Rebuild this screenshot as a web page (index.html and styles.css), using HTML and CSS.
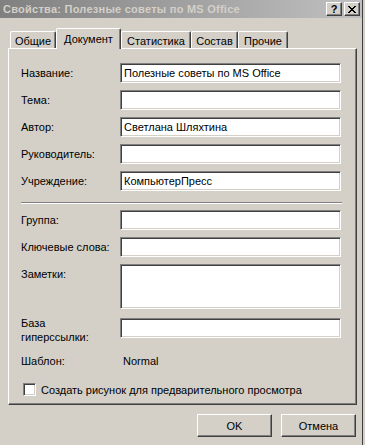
FILE: index.html
```html
<!DOCTYPE html>
<html lang="ru">
<head>
<meta charset="utf-8">
<title>Свойства</title>
<link rel="stylesheet" href="styles.css">
</head>
<body>
<div class="window">
  <div class="titlebar">
    <span class="title">Свойства: Полезные советы по MS Office</span>
    <div class="caption-btns">
      <span class="cbtn cbtn-help">?</span>
      <span class="cbtn cbtn-close"><svg width="8" height="7" viewBox="0 0 8 7"><path d="M0 0h2v1h1v1h2v-1h1v-1h2v1h-1v1h-1v1h-1v1h1v1h1v1h1v1h-2v-1h-1v-1h-2v1h-1v1h-2v-1h1v-1h1v-1h1v-1h-1v-1h-1v-1h-1z" fill="#000"/></svg></span>
    </div>
  </div>
  <div class="tabs">
    <div class="tab tab-general">Общие</div>
    <div class="tab tab-doc active">Документ</div>
    <div class="tab tab-stat">Статистика</div>
    <div class="tab tab-comp">Состав</div>
    <div class="tab tab-other">Прочие</div>
  </div>
  <div class="panel">
    <div class="grid">
      <label class="lbl">Название:</label>
      <input class="field" type="text" value="Полезные советы по MS Office">
      <label class="lbl">Тема:</label>
      <input class="field" type="text" value="">
      <label class="lbl">Автор:</label>
      <input class="field" type="text" value="Светлана Шляхтина">
      <label class="lbl">Руководитель:</label>
      <input class="field" type="text" value="">
      <label class="lbl">Учреждение:</label>
      <input class="field" type="text" value="КомпьютерПресс">
    </div>
    <div class="sep"></div>
    <div class="grid">
      <label class="lbl">Группа:</label>
      <input class="field" type="text" value="">
      <label class="lbl">Ключевые слова:</label>
      <input class="field" type="text" value="">
      <label class="lbl">Заметки:</label>
      <textarea class="field notes"></textarea>
      <label class="lbl lbl-two">База<br>гиперссылки:</label>
      <input class="field field-base" type="text" value="">
      <span class="lbl lbl-plain">Шаблон:</span>
      <span class="value">Normal</span>
    </div>
    <div class="check-row">
      <span class="checkbox"></span>
      <span class="check-label">Создать рисунок для предварительного просмотра</span>
    </div>
  </div>
  <div class="buttons">
    <span class="btn">OK</span>
    <span class="btn">Отмена</span>
  </div>
</div>
</body>
</html>
```

FILE: styles.css
```css
html, body {
  margin: 0;
  padding: 0;
  background: #d4d0c8;
  width: 365px;
  height: 445px;
  overflow: hidden;
}
body {
  font-family: "Liberation Sans", Arial, sans-serif;
  font-size: 11px;
  color: #000;
}
.window {
  width: 362px;
  height: 445px;
  border-right: 1px solid #404040;
  background: #d4d0c8;
}
.titlebar {
  height: 18px;
  display: flex;
  align-items: center;
  justify-content: space-between;
  background: linear-gradient(to right, #808080, #c0c0c0);
}
.title {
  font-weight: bold;
  color: #d4d0c8;
  padding-left: 3px;
  font-size: 11px;
  letter-spacing: 0.25px;
  white-space: nowrap;
}
.caption-btns {
  display: flex;
  gap: 2px;
  margin-right: 2px;
}
.cbtn {
  box-sizing: border-box;
  width: 16px;
  height: 14px;
  background: #d4d0c8;
  border: 1px solid;
  border-color: #fff #404040 #404040 #fff;
  box-shadow: inset -1px -1px #808080;
  display: flex;
  align-items: center;
  justify-content: center;
  font-weight: bold;
  font-size: 11px;
  line-height: 1;
}
.cbtn-close svg { display: block; }
.tabs {
  height: 30px;
  display: flex;
  align-items: flex-end;
  padding-left: 10px;
  position: relative;
  z-index: 1;
}
.tab {
  box-sizing: border-box;
  height: 17px;
  background: #d4d0c8;
  border-top: 1px solid #fff;
  border-left: 1px solid #fff;
  border-right: 1px solid #404040;
  box-shadow: inset -1px 0 #808080;
  border-radius: 2px 2px 0 0;
  display: flex;
  align-items: center;
  justify-content: center;
  white-space: nowrap;
  padding-top: 1px;
}
.tab.active {
  height: 21px;
  margin-bottom: -1px;
  padding-bottom: 2px;
}
.tab-general { width: 46px; }
.tab-doc { width: 65px; }
.tab-stat { width: 70px; }
.tab-comp { width: 47px; }
.tab-other { width: 50px; }
.panel {
  box-sizing: border-box;
  margin-left: 8px;
  width: 349px;
  height: 357px;
  border-top: 1px solid #fff;
  border-left: 1px solid #fff;
  border-right: 1px solid #404040;
  border-bottom: 1px solid #404040;
  box-shadow: inset -1px -1px #808080;
  padding: 14px 0 0 12px;
}
.grid {
  display: grid;
  grid-template-columns: 99px 221px;
  row-gap: 7px;
  align-items: start;
}
.lbl {
  line-height: 14px;
  padding-top: 3px;
  white-space: nowrap;
}
.lbl-two {
  padding-top: 0;
  margin-top: 0;
}
.lbl-plain {
  padding-top: 3px;
}
.value {
  padding-left: 3px;
  padding-top: 3px;
  line-height: 14px;
}
.field {
  box-sizing: border-box;
  height: 20px;
  width: 221px;
  margin: 0;
  border: 1px solid;
  border-color: #808080 #fff #fff #808080;
  box-shadow: inset 1px 1px #404040, inset -1px -1px #d4d0c8;
  background: #fff;
  padding: 0 3px;
  font-family: "Liberation Sans", Arial, sans-serif;
  font-size: 11px;
  color: #000;
  outline: none;
}
.notes {
  height: 45px;
  resize: none;
  display: block;
}
.field-base {
  margin-top: 2px;
}
.sep {
  width: 321px;
  height: 0;
  border-top: 1px solid #808080;
  border-bottom: 1px solid #fff;
  margin: 11px 0 6px 0;
}
.check-row {
  display: flex;
  align-items: center;
  margin-top: 15px;
  padding-left: 2px;
}
.checkbox {
  box-sizing: border-box;
  width: 13px;
  height: 13px;
  background: #fff;
  border: 1px solid;
  border-color: #808080 #fff #fff #808080;
  box-shadow: inset 1px 1px #404040, inset -1px -1px #d4d0c8;
}
.check-label {
  margin-left: 5px;
  white-space: nowrap;
}
.buttons {
  display: flex;
  justify-content: flex-end;
  gap: 9px;
  padding-right: 6px;
  margin-top: 9px;
}
.btn {
  box-sizing: border-box;
  width: 75px;
  height: 23px;
  background: #d4d0c8;
  border: 1px solid;
  border-color: #fff #404040 #404040 #fff;
  box-shadow: inset -1px -1px #808080;
  display: flex;
  align-items: center;
  justify-content: center;
}
```
